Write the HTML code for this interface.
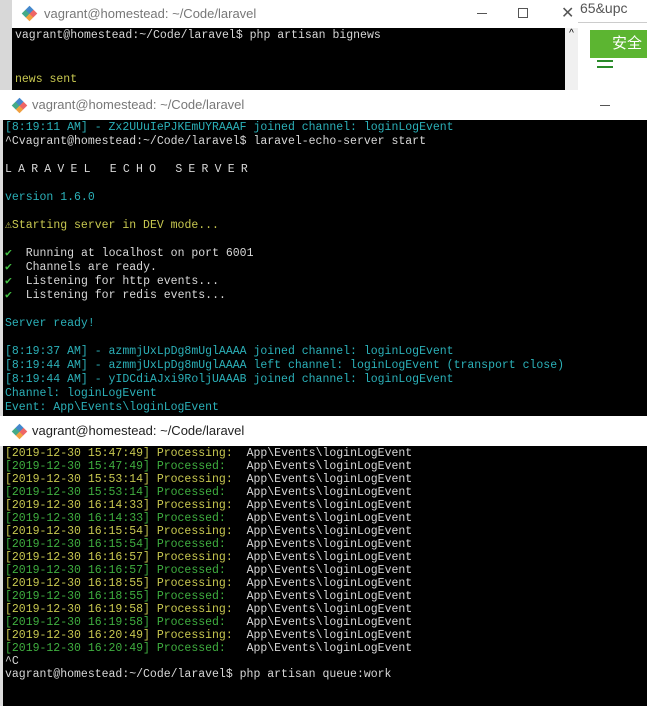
<!DOCTYPE html>
<html><head><meta charset="utf-8"><style>
*{margin:0;padding:0;box-sizing:border-box}
body{width:647px;height:706px;overflow:hidden;background:#f0f0f0;position:relative;font-family:"Liberation Sans","Noto Sans CJK SC",sans-serif}
.abs{position:absolute}
pre{font-family:"Liberation Mono",monospace;font-size:11.5px;white-space:pre;color:#cfcfcf}
.title{background:#fff;color:#444;font-size:13px}
.icon{position:absolute;width:11px;height:11px;transform:rotate(45deg);background:conic-gradient(#e66 0 25%,#f0a040 25% 50%,#4a8 50% 75%,#48c 75%)}
.c{color:#2bb0b8}.y{color:#c8c850}.g{color:#3fae3f}.w{color:#d8d8d8}.gr{color:#43c043}
</style></head><body>
<div class="abs" style="left:578px;top:0;width:69px;height:90px;background:#fff"></div>
<div class="abs" style="left:580px;top:0;font-size:14px;color:#555">65&amp;upc</div>
<div class="abs" style="left:578px;top:22px;width:69px;height:1px;background:#ccc"></div>
<div class="abs" style="left:590px;top:30px;width:57px;height:28px;background:#5cb531;color:#fff;font-size:15px;line-height:28px;padding-left:22px">安全</div>
<div class="abs" style="left:597px;top:60px;width:16px;height:8px;border-top:2px solid #2a8a2a;border-bottom:2px solid #2a8a2a"></div>
<div class="abs" style="left:0;top:0;width:12px;height:90px;background:#d8d8d8"></div>

<div class="abs title" style="left:12px;top:0;width:566px;height:28px">
 <div class="icon" style="left:12px;top:8px"></div>
 <div class="abs" style="left:32px;top:6px;color:#777">vagrant@homestead: ~/Code/laravel</div>
 <div class="abs" style="left:465px;top:13px;width:10px;height:1px;background:#555"></div>
 <div class="abs" style="left:506px;top:8px;width:10px;height:10px;border:1px solid #555"></div>
 <div class="abs" style="left:549px;top:3px;font-size:16px;color:#555">✕</div>
</div>
<div class="abs" style="left:12px;top:28px;width:553px;height:62px;background:#000"></div>
<div class="abs" style="left:565px;top:28px;width:13px;height:62px;background:#f0f0f0;font-size:10px;text-align:center">^</div>
<pre class="abs" style="left:15px;top:29px;line-height:14.5px"><span class="w">vagrant@homestead:~/Code/laravel$ php artisan bignews</span>


<span class="y">news sent</span>
</pre>

<div class="abs title" style="left:0;top:90px;width:647px;height:30px">
 <div class="icon" style="left:14px;top:10px"></div>
 <div class="abs" style="left:32px;top:7px;color:#777">vagrant@homestead: ~/Code/laravel</div>
 <div class="abs" style="left:600px;top:15px;width:10px;height:1px;background:#555"></div>
</div>
<div class="abs" style="left:0;top:120px;width:647px;height:296px;background:#000;border-left:3px solid #ddd"></div>
<pre class="abs" style="left:5px;top:121px;line-height:14px"><span class="c">[8:19:11 AM] - Zx2UUuIePJKEmUYRAAAF joined channel: loginLogEvent</span>
<span class="w">^Cvagrant@homestead:~/Code/laravel$ laravel-echo-server start</span>

<span class="w" style="letter-spacing:6.2px">LARAVEL ECHO SERVER</span>

<span class="c">version 1.6.0</span>

<span class="y">⚠Starting server in DEV mode...</span>

<span class="gr">✔</span>  <span class="w">Running at localhost on port 6001</span>
<span class="gr">✔</span>  <span class="w">Channels are ready.</span>
<span class="gr">✔</span>  <span class="w">Listening for http events...</span>
<span class="gr">✔</span>  <span class="w">Listening for redis events...</span>

<span class="c">Server ready!</span>

<span class="c">[8:19:37 AM] - azmmjUxLpDg8mUglAAAA joined channel: loginLogEvent
[8:19:44 AM] - azmmjUxLpDg8mUglAAAA left channel: loginLogEvent (transport close)
[8:19:44 AM] - yIDCdiAJxi9RoljUAAAB joined channel: loginLogEvent
Channel: loginLogEvent
Event: App\Events\loginLogEvent</span></pre>

<div class="abs title" style="left:0;top:416px;width:647px;height:30px">
 <div class="icon" style="left:14px;top:10px"></div>
 <div class="abs" style="left:32px;top:7px;color:#222">vagrant@homestead: ~/Code/laravel</div>
</div>
<div class="abs" style="left:0;top:446px;width:647px;height:260px;background:#000;border-left:3px solid #ddd"></div>
<pre class="abs" style="left:5px;top:447px;line-height:13px"><span class="y">[2019-12-30 15:47:49] Processing:</span>  <span class="w">App\Events\loginLogEvent</span>
<span class="g">[2019-12-30 15:47:49] Processed:</span>   <span class="w">App\Events\loginLogEvent</span>
<span class="y">[2019-12-30 15:53:14] Processing:</span>  <span class="w">App\Events\loginLogEvent</span>
<span class="g">[2019-12-30 15:53:14] Processed:</span>   <span class="w">App\Events\loginLogEvent</span>
<span class="y">[2019-12-30 16:14:33] Processing:</span>  <span class="w">App\Events\loginLogEvent</span>
<span class="g">[2019-12-30 16:14:33] Processed:</span>   <span class="w">App\Events\loginLogEvent</span>
<span class="y">[2019-12-30 16:15:54] Processing:</span>  <span class="w">App\Events\loginLogEvent</span>
<span class="g">[2019-12-30 16:15:54] Processed:</span>   <span class="w">App\Events\loginLogEvent</span>
<span class="y">[2019-12-30 16:16:57] Processing:</span>  <span class="w">App\Events\loginLogEvent</span>
<span class="g">[2019-12-30 16:16:57] Processed:</span>   <span class="w">App\Events\loginLogEvent</span>
<span class="y">[2019-12-30 16:18:55] Processing:</span>  <span class="w">App\Events\loginLogEvent</span>
<span class="g">[2019-12-30 16:18:55] Processed:</span>   <span class="w">App\Events\loginLogEvent</span>
<span class="y">[2019-12-30 16:19:58] Processing:</span>  <span class="w">App\Events\loginLogEvent</span>
<span class="g">[2019-12-30 16:19:58] Processed:</span>   <span class="w">App\Events\loginLogEvent</span>
<span class="y">[2019-12-30 16:20:49] Processing:</span>  <span class="w">App\Events\loginLogEvent</span>
<span class="g">[2019-12-30 16:20:49] Processed:</span>   <span class="w">App\Events\loginLogEvent</span>
<span class="w">^C
vagrant@homestead:~/Code/laravel$ php artisan queue:work</span></pre>
</body></html>
